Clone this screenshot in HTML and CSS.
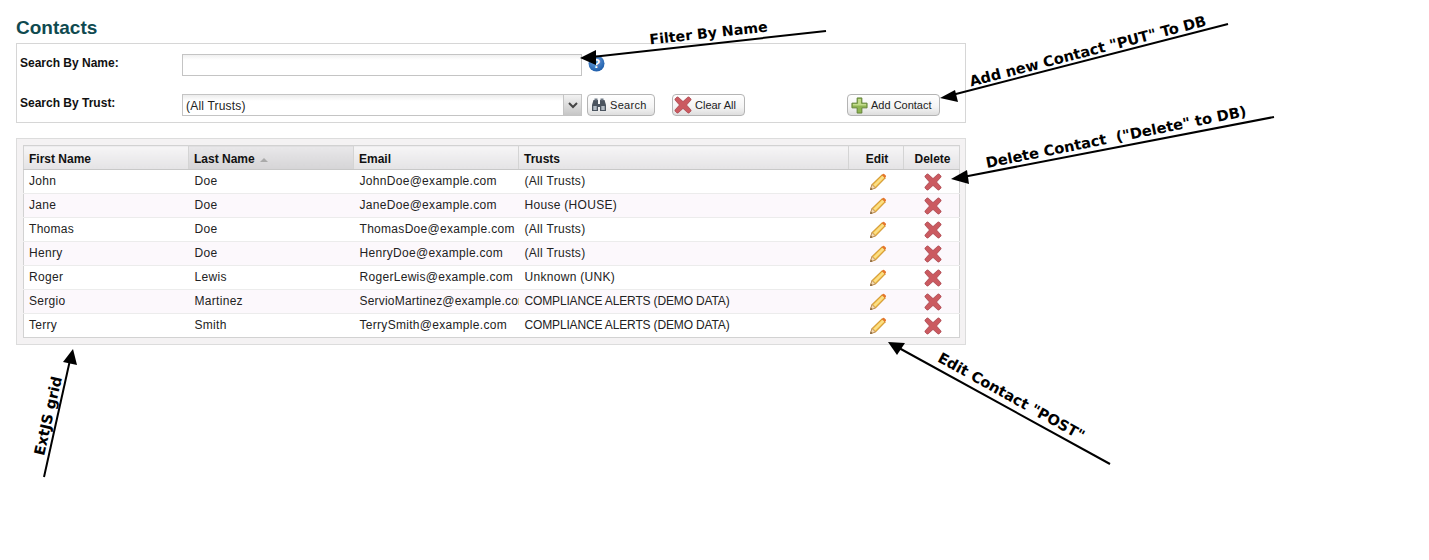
FILE: index.html
```html
<!DOCTYPE html>
<html lang="en">
<head>
  <meta charset="UTF-8">
  <title>Contacts</title>
  <link rel="stylesheet" href="styles.css">
</head>
<body>
  <svg class="icon-defs" width="0" height="0">
    <symbol id="i-pencil" viewBox="0 0 18 18">
      <path d="M1.5 16.5 L3 11.5 L13 1.8 L16.3 5 L6.5 15 Z" fill="#f2c04a" stroke="#c98a22" stroke-width="1"/>
      <path d="M4.6 11.8 L13.8 2.8 L15.3 4.3 L6.2 13.4 Z" fill="#fbe08a"/>
      <path d="M12.8 2 L13.8 1 Q14.5 .5 15.2 1 L16.8 2.6 Q17.3 3.3 16.8 4 L15.9 5 Z" fill="#e5762c"/>
      <path d="M1.5 16.5 L3 11.5 L6.5 15 Z" fill="#f5dcb4" stroke="#b98d5c" stroke-width=".8"/>
      <path d="M1.2 17 L1.9 14.8 L3.4 16.2 Z" fill="#6b5237"/>
    </symbol>
    <symbol id="i-cross" viewBox="0 0 18 18">
      <path d="M4.2 1.2 L9 5.6 L13.8 1.2 Q14.6 .7 15.3 1.3 L16.8 2.8 Q17.3 3.5 16.8 4.2 L12.5 9 L16.8 13.8 Q17.3 14.5 16.8 15.2 L15.3 16.7 Q14.6 17.3 13.8 16.8 L9 12.4 L4.2 16.8 Q3.4 17.3 2.7 16.7 L1.2 15.2 Q.7 14.5 1.2 13.8 L5.5 9 L1.2 4.2 Q.7 3.5 1.2 2.8 L2.7 1.3 Q3.4 .7 4.2 1.2 Z" fill="#cb5a60" stroke="#a8444c" stroke-width=".8"/>
    </symbol>
    <symbol id="i-plus" viewBox="0 0 18 18">
      <path d="M6.5 1 H11.5 V6.5 H17 V11.5 H11.5 V17 H6.5 V11.5 H1 V6.5 H6.5 Z" fill="#8fb552" stroke="#5f7f34" stroke-width="1" stroke-linejoin="round"/>
      <path d="M7.5 2 H10.5 V7.5 H16 V9 H2 V7.5 H7.5 Z" fill="#c3dc8c"/>
    </symbol>
    <symbol id="i-binoculars" viewBox="0 0 16 16">
      <path d="M1 8 L2.5 3 H7 V7 H9 V3 H13.5 L15 8 V14 H9 V10 H7 V14 H1 Z" fill="#4c5560"/>
      <rect x="3.5" y="1.5" width="3" height="2" fill="#6e7884"/>
      <rect x="9.5" y="1.5" width="3" height="2" fill="#6e7884"/>
      <rect x="2.3" y="9" width="3.4" height="4" fill="#b4bcc5"/>
      <rect x="10.3" y="9" width="3.4" height="4" fill="#b4bcc5"/>
    </symbol>
  </svg>

  <h1 class="page-title">Contacts</h1>

  <!-- Search panel -->
  <div class="search-panel">
    <div class="search-row name-row">
      <label class="search-label">Search By Name:</label>
      <div class="text-field"></div>
      <svg class="help-icon" width="17" height="17" viewBox="0 0 17 17">
        <defs>
          <radialGradient id="help-fill" cx="40%" cy="30%" r="75%">
            <stop offset="0" stop-color="#6ea4e0"/>
            <stop offset="1" stop-color="#1a5aa8"/>
          </radialGradient>
        </defs>
        <circle cx="8.5" cy="8.5" r="8" fill="url(#help-fill)"/>
        <text x="8.5" y="13" text-anchor="middle" class="help-mark">?</text>
      </svg>
    </div>
    <div class="search-row">
      <label class="search-label">Search By Trust:</label>
      <div class="combo">
        <span class="combo-text">(All Trusts)</span>
        <span class="combo-trigger">
          <svg width="10" height="7" viewBox="0 0 10 7"><path d="M1 1 L5 5 L9 1" fill="none" stroke="#444" stroke-width="2"/></svg>
        </span>
      </div>
      <button class="btn btn-search"><svg width="16" height="16"><use href="#i-binoculars"/></svg>Search</button>
      <button class="btn btn-clear"><svg width="18" height="18"><use href="#i-cross"/></svg>Clear All</button>
      <button class="btn btn-add"><svg width="17" height="17"><use href="#i-plus"/></svg>Add Contact</button>
    </div>
  </div>

  <!-- Contacts grid -->
  <div class="grid-panel">
    <table class="grid">
      <colgroup>
        <col class="col-name"><col class="col-name"><col class="col-name"><col class="col-trusts"><col class="col-edit"><col class="col-delete">
      </colgroup>
      <thead>
        <tr>
          <th>First Name</th>
          <th class="sorted">Last Name <span class="sort-arrow"></span></th>
          <th>Email</th>
          <th>Trusts</th>
          <th class="center">Edit</th>
          <th class="center">Delete</th>
        </tr>
      </thead>
      <tbody>
        <tr>
          <td><div class="cell">John</div></td><td><div class="cell">Doe</div></td><td><div class="cell">JohnDoe@example.com</div></td><td><div class="cell">(All Trusts)</div></td>
          <td class="center"><svg class="act" width="18" height="18"><use href="#i-pencil"/></svg></td><td class="center"><svg class="act" width="18" height="18"><use href="#i-cross"/></svg></td>
        </tr>
        <tr>
          <td><div class="cell">Jane</div></td><td><div class="cell">Doe</div></td><td><div class="cell">JaneDoe@example.com</div></td><td><div class="cell">House (HOUSE)</div></td>
          <td class="center"><svg class="act" width="18" height="18"><use href="#i-pencil"/></svg></td><td class="center"><svg class="act" width="18" height="18"><use href="#i-cross"/></svg></td>
        </tr>
        <tr>
          <td><div class="cell">Thomas</div></td><td><div class="cell">Doe</div></td><td><div class="cell">ThomasDoe@example.com</div></td><td><div class="cell">(All Trusts)</div></td>
          <td class="center"><svg class="act" width="18" height="18"><use href="#i-pencil"/></svg></td><td class="center"><svg class="act" width="18" height="18"><use href="#i-cross"/></svg></td>
        </tr>
        <tr>
          <td><div class="cell">Henry</div></td><td><div class="cell">Doe</div></td><td><div class="cell">HenryDoe@example.com</div></td><td><div class="cell">(All Trusts)</div></td>
          <td class="center"><svg class="act" width="18" height="18"><use href="#i-pencil"/></svg></td><td class="center"><svg class="act" width="18" height="18"><use href="#i-cross"/></svg></td>
        </tr>
        <tr>
          <td><div class="cell">Roger</div></td><td><div class="cell">Lewis</div></td><td><div class="cell">RogerLewis@example.com</div></td><td><div class="cell">Unknown (UNK)</div></td>
          <td class="center"><svg class="act" width="18" height="18"><use href="#i-pencil"/></svg></td><td class="center"><svg class="act" width="18" height="18"><use href="#i-cross"/></svg></td>
        </tr>
        <tr>
          <td><div class="cell">Sergio</div></td><td><div class="cell">Martinez</div></td><td><div class="cell tight">ServioMartinez@example.com</div></td><td><div class="cell caps">COMPLIANCE ALERTS (DEMO DATA)</div></td>
          <td class="center"><svg class="act" width="18" height="18"><use href="#i-pencil"/></svg></td><td class="center"><svg class="act" width="18" height="18"><use href="#i-cross"/></svg></td>
        </tr>
        <tr>
          <td><div class="cell">Terry</div></td><td><div class="cell">Smith</div></td><td><div class="cell">TerrySmith@example.com</div></td><td><div class="cell caps">COMPLIANCE ALERTS (DEMO DATA)</div></td>
          <td class="center"><svg class="act" width="18" height="18"><use href="#i-pencil"/></svg></td><td class="center"><svg class="act" width="18" height="18"><use href="#i-cross"/></svg></td>
        </tr>
      </tbody>
    </table>
  </div>

  <!-- Hand drawn notes over the screenshot -->
  <svg class="notes" width="1429" height="560" viewBox="0 0 1429 560">
    <g stroke="#000" stroke-width="2">
      <line x1="826" y1="31" x2="592" y2="57"/>
      <line x1="1228" y1="24" x2="952" y2="95"/>
      <line x1="1274" y1="117" x2="963" y2="177"/>
      <line x1="1110" y1="464" x2="899" y2="348"/>
      <line x1="44" y1="477" x2="70" y2="360"/>
    </g>
    <path d="M580 58 L596 50 L596 65 Z"/>
    <path d="M940 98 L955 90 L958 102 Z"/>
    <path d="M951 179 L967 170 L969 184 Z"/>
    <path d="M888 342 L905 343 L897 355 Z"/>
    <path d="M73 349 L63 362 L77 365 Z"/>
    <text class="note note-small" x="709" y="38" transform="rotate(-6.3 709 38)">Filter By Name</text>
    <text class="note" x="1089" y="56" transform="rotate(-14.5 1089 56)">Add new Contact "PUT" To DB</text>
    <text class="note" x="1117" y="142" transform="rotate(-11.3 1117 142)">Delete Contact&#160;&#160;("Delete" to DB)</text>
    <text class="note" x="1009" y="401" transform="rotate(29 1009 401)">Edit Contact "POST"</text>
    <text class="note" x="53" y="417" transform="rotate(-77 53 417)">ExtJS grid</text>
  </svg>
</body>
</html>
```

FILE: styles.css
```css
body {
  margin: 0;
  padding: 17px 0 0 16px;
  font-family: "Liberation Sans", Arial, sans-serif;
  font-size: 12px;
  color: #222;
  background: #fff;
}
.icon-defs {
  display: block;
  height: 0;
}
.page-title {
  margin: 0 0 4px;
  font-size: 19px;
  line-height: 22px;
  color: #0f4a50;
}

/* search panel */
.search-panel {
  box-sizing: border-box;
  width: 950px;
  height: 80px;
  padding: 10px 25px 0 2px;
  border: 1px solid #d6d6d6;
}
.search-row {
  display: flex;
  align-items: flex-start;
  height: 22px;
}
.name-row {
  margin-bottom: 18px;
}
.search-label {
  width: 162px;
  padding-left: 1px;
  font-weight: bold;
  line-height: 18px;
  color: #111;
  flex: none;
}
.text-field {
  box-sizing: border-box;
  width: 400px;
  height: 22px;
  border: 1px solid #c4c4c4;
  background: linear-gradient(#f0f0f0, #fff 5px);
}
.help-icon {
  margin: 1px 0 0 6px;
}
.help-mark {
  font-family: "Liberation Sans", Arial, sans-serif;
  font-size: 13px;
  font-weight: bold;
  fill: #fff;
}
.combo {
  box-sizing: border-box;
  display: flex;
  justify-content: space-between;
  width: 400px;
  height: 22px;
  border: 1px solid #c4c4c4;
  background: linear-gradient(#ececec, #fff 6px);
}
.combo-text {
  padding-left: 3px;
  line-height: 23px;
  letter-spacing: .2px;
}
.combo-trigger {
  display: flex;
  align-items: center;
  justify-content: center;
  width: 17px;
  background: linear-gradient(#f2f2f2, #c6c6c6);
  border-left: 1px solid #c4c4c4;
}
.btn {
  box-sizing: border-box;
  display: flex;
  align-items: center;
  height: 22px;
  padding: 0 0 0 3px;
  border: 1px solid #b4b4b4;
  border-radius: 4px;
  background: linear-gradient(#fff, #f4f4f4 60%, #dedede);
  font-family: "Liberation Sans", Arial, sans-serif;
  font-size: 11px;
  color: #222;
}
.btn svg {
  margin-right: 3px;
  flex: none;
}
.btn-search {
  width: 68px;
  margin-left: 5px;
  letter-spacing: .3px;
}
.btn-clear {
  width: 73px;
  margin-left: 17px;
  padding-left: 1px;
}
.btn-add {
  width: 93px;
  margin-left: auto;
}

/* grid */
.grid-panel {
  box-sizing: border-box;
  width: 950px;
  height: 207px;
  margin-top: 15px;
  padding: 6px;
  border: 1px solid #dcdcdc;
  background: #f4f2f3;
}
.grid {
  width: 937px;
  table-layout: fixed;
  border-collapse: collapse;
  background: #fff;
  border: 1px solid #d2d2d2;
}
.col-name { width: 165px; }
.col-trusts { width: 330px; }
.col-edit { width: 55px; }
.col-delete { width: 56px; }
.grid th {
  height: 21px;
  padding: 2px 0 0 5px;
  border-right: 1px solid #d4d4d4;
  border-bottom: 1px solid #c8c8c8;
  background: linear-gradient(#f6f5f6, #e4e3e5);
  font-size: 12px;
  text-align: left;
  color: #111;
}
.grid th.sorted {
  border-left: 1px solid #a8a8a8;
  background: linear-gradient(#e9e8ea, #d5d4d6);
}
.sort-arrow {
  display: inline-block;
  margin: 0 0 1px 2px;
  border-left: 4px solid transparent;
  border-right: 4px solid transparent;
  border-bottom: 4px solid #aaa;
}
.grid td {
  height: 23px;
  padding: 0;
  vertical-align: top;
  border-bottom: 1px solid #ececec;
}
.grid tbody tr:nth-child(even) {
  background: #fcf8fc;
}
.grid tbody tr:last-child td {
  border-bottom: none;
}
.cell {
  height: 23px;
  padding-left: 6px;
  overflow: hidden;
  white-space: nowrap;
  letter-spacing: .3px;
  line-height: 22px;
}
.grid td:first-child .cell {
  padding-left: 5px;
}
.cell.tight {
  letter-spacing: .2px;
}
.cell.caps {
  letter-spacing: -.15px;
}
.grid th.center {
  padding-left: 2px;
  text-align: center;
}
.grid td.center {
  padding-left: 4px;
  text-align: center;
}
.act {
  display: block;
  margin: 3px auto 2px;
}

/* annotations */
.notes {
  position: absolute;
  left: 0;
  top: 0;
  pointer-events: none;
}
.note {
  font-family: "DejaVu Sans", Verdana, sans-serif;
  font-size: 14.6px;
  font-weight: bold;
  text-anchor: middle;
  fill: #000;
}
.note-small {
  font-size: 14.2px;
}
```
